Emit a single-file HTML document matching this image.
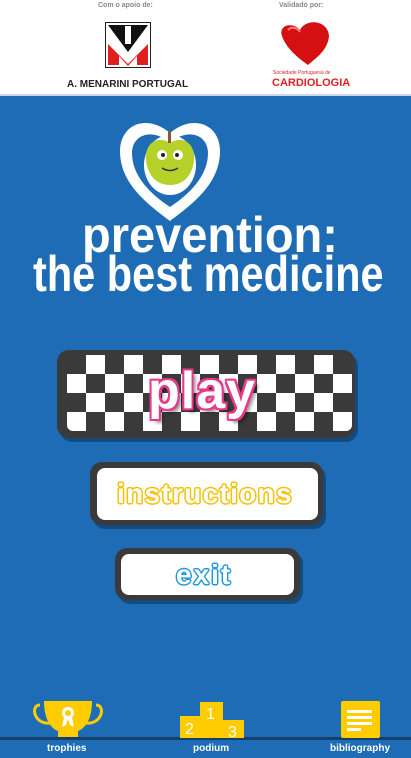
<!DOCTYPE html>
<html><head><meta charset="utf-8"><style>
*{margin:0;padding:0;box-sizing:border-box}
body{width:411px;height:758px;overflow:hidden;background:#1e6cb6;font-family:"Liberation Sans",sans-serif;position:relative}
.hdr{position:absolute;left:0;top:0;width:411px;height:96px;background:#fff;border-bottom:2px solid #cfd8e3}
.sm{position:absolute;font-size:7px;color:#888;font-weight:bold}
.t{position:absolute;color:#fff;font-weight:bold;white-space:nowrap;transform-origin:0 0}
.btn{position:absolute;background:#3a3a3a;border-radius:12px;box-shadow:3px 4px 0 rgba(0,0,0,.3)}
.inner{position:absolute;background:#fff;border-radius:8px}
.lbl{position:absolute;color:#fff;font-size:10px;font-weight:bold;top:743px}
.o{position:absolute;font-weight:bold;color:#fff;white-space:nowrap}
</style></head><body>
<div class="hdr">
 <div class="sm" style="left:98px;top:2px">Com o apoio de:</div>
 <div class="sm" style="left:279px;top:2px">Validado por:</div>
 <svg style="position:absolute;left:105px;top:22px" width="46" height="46" viewBox="0 0 46 46">
  <rect x="0.5" y="0.5" width="45" height="45" fill="#fff" stroke="#222"/>
  <polygon points="3,3 43,3 23,30" fill="#111"/>
  <polygon points="3,22 3,43 14,43 14,34 23,44 32,34 32,43 43,43 43,22 23,42" fill="#e0201e"/>
  <rect x="20" y="4" width="6" height="18" fill="#fff"/>
 </svg>
 <div style="position:absolute;left:67px;top:79px;font-size:10px;font-weight:bold;color:#222">A. MENARINI PORTUGAL</div>
 <svg style="position:absolute;left:276px;top:18px" width="60" height="48" viewBox="0 0 60 48">
  <path d="M6,18 C2,6 18,4 24,12 C30,0 52,2 53,18 C52,32 40,40 32,47 C22,40 10,30 6,18Z" fill="#d41010"/>
  <path d="M12,12 C16,8 22,10 24,14" stroke="#f77" stroke-width="2" fill="none"/>
 </svg>
 <div style="position:absolute;left:273px;top:70px;font-size:5px;color:#d22">Sociedade Portuguesa de</div>
 <div style="position:absolute;left:272px;top:77px;font-size:11px;font-weight:bold;color:#d22">CARDIOLOGIA</div>
</div>
<svg style="position:absolute;left:116px;top:113px" width="108" height="110" viewBox="0 0 108 110">
 <path d="M54,108 C30,90 4,70 4,38 C4,12 30,0 54,20 C78,0 104,12 104,38 C104,70 78,90 54,108Z" fill="#fff"/>
 <path d="M54,94 C36,82 16,64 16,40 C16,22 36,14 54,30 C72,14 92,22 92,40 C92,64 72,82 54,94Z" fill="#1e6cb6"/>
 <ellipse cx="54" cy="52" rx="26" ry="30" fill="#fff"/>
 <path d="M54,30 C42,22 28,30 30,48 C32,62 40,72 54,72 C68,72 76,62 78,48 C80,30 66,22 54,30Z" fill="#b6d22a"/>
 <rect x="52" y="18" width="3" height="12" fill="#8a5a2b"/>
 <circle cx="46" cy="42" r="5" fill="#fff"/><circle cx="62" cy="42" r="5" fill="#fff"/>
 <circle cx="47" cy="42" r="2" fill="#222"/><circle cx="61" cy="42" r="2" fill="#222"/>
 <path d="M46,55 Q54,60 62,55" stroke="#333" stroke-width="1.5" fill="none"/>
</svg>
<div class="t" style="left:82px;top:206px;font-size:50px;transform:scaleX(.94)">prevention:</div>
<div class="t" style="left:33px;top:245px;font-size:50px;transform:scaleX(.83)">the best medicine</div>

<div class="btn" style="left:57px;top:350px;width:298px;height:88px"></div>
<svg style="position:absolute;left:67px;top:355px;border-radius:6px" width="285" height="76">
 <defs><pattern id="c" width="38" height="38" patternUnits="userSpaceOnUse"><rect width="38" height="38" fill="#3a3a3a"/><rect x="19" width="19" height="19" fill="#fff"/><rect y="19" width="19" height="19" fill="#fff"/></pattern></defs>
 <rect width="285" height="76" fill="url(#c)"/>
</svg>
<div class="o" style="left:148px;top:361px;font-size:52px;letter-spacing:1px;text-shadow:-2px 0 #e8398e,2px 0 #e8398e,0 -2px #e8398e,0 2px #e8398e,-2px -2px #e8398e,2px 2px #e8398e,-2px 2px #e8398e,2px -2px #e8398e,4px 4px 3px rgba(0,0,0,.4)">play</div>

<div class="btn" style="left:90px;top:462px;width:233px;height:63px"></div>
<div class="inner" style="left:97px;top:468px;width:221px;height:52px"></div>
<div class="o" style="left:117px;top:478px;font-size:28px;letter-spacing:1.3px;text-shadow:-1.5px 0 #f5c000,1.5px 0 #f5c000,0 -1.5px #f5c000,0 1.5px #f5c000,-1px -1px #f5c000,1px 1px #f5c000,-1px 1px #f5c000,1px -1px #f5c000">instructions</div>

<div class="btn" style="left:115px;top:548px;width:185px;height:52px"></div>
<div class="inner" style="left:121px;top:554px;width:173px;height:41px"></div>
<div class="o" style="left:176px;top:559px;font-size:28px;letter-spacing:2px;text-shadow:-1.5px 0 #1e9ae0,1.5px 0 #1e9ae0,0 -1.5px #1e9ae0,0 1.5px #1e9ae0,-1px -1px #1e9ae0,1px 1px #1e9ae0,-1px 1px #1e9ae0,1px -1px #1e9ae0">exit</div>

<div style="position:absolute;left:0;top:737px;width:411px;height:3px;background:#15406e"></div>
<svg style="position:absolute;left:32px;top:699px" width="72" height="40" viewBox="0 0 72 40">
 <path d="M8,6 C-2,6 2,26 18,24" stroke="#fc0" stroke-width="3" fill="none"/>
 <path d="M64,6 C74,6 70,26 54,24" stroke="#fc0" stroke-width="3" fill="none"/>
 <path d="M12,2 H60 C60,22 52,30 46,32 V38 H26 V32 C20,30 12,22 12,2Z" fill="#fc0"/>
 <circle cx="36" cy="14" r="6" fill="#fff"/><circle cx="36" cy="14" r="3" fill="#fc0"/>
 <path d="M32,18 L30,28 L34,26 L36,20 M40,18 L42,28 L38,26 L36,20" fill="#fff"/>
</svg>
<svg style="position:absolute;left:180px;top:702px" width="64" height="36" viewBox="0 0 64 36">
 <rect x="0" y="14" width="21" height="22" fill="#fc0"/><rect x="20" y="0" width="23" height="36" fill="#fc0"/><rect x="42" y="18" width="22" height="18" fill="#fc0"/>
 <text x="5" y="32" font-size="16" fill="#fff" font-family="Liberation Sans">2</text>
 <text x="26" y="17" font-size="16" fill="#fff" font-family="Liberation Sans">1</text>
 <text x="48" y="35" font-size="16" fill="#fff" font-family="Liberation Sans">3</text>
</svg>
<svg style="position:absolute;left:341px;top:701px" width="39" height="37" viewBox="0 0 39 37">
 <rect width="39" height="37" rx="2" fill="#fc0"/>
 <rect x="6" y="9" width="25" height="3" fill="#fff"/><rect x="6" y="15" width="25" height="3" fill="#fff"/><rect x="6" y="21" width="25" height="3" fill="#fff"/><rect x="6" y="27" width="14" height="3" fill="#fff"/>
</svg>
<div class="lbl" style="left:47px">trophies</div>
<div class="lbl" style="left:193px">podium</div>
<div class="lbl" style="left:330px">bibliography</div>
</body></html>
